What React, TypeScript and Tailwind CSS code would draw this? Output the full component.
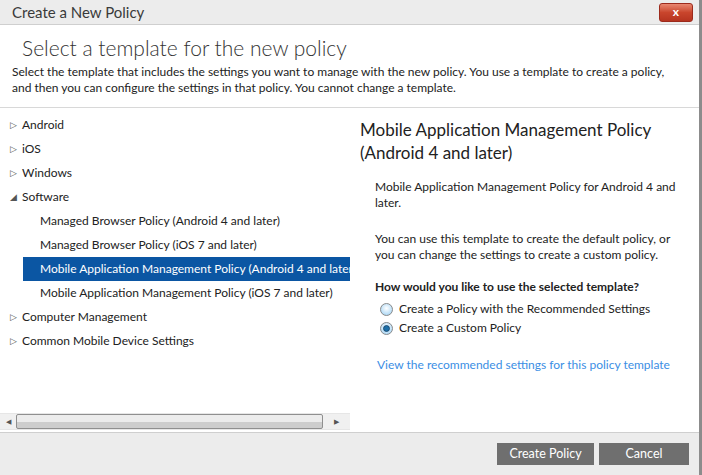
import { useState } from 'react';

const tree = [
  { label: 'Android', open: false },
  { label: 'iOS', open: false },
  { label: 'Windows', open: false },
  {
    label: 'Software',
    open: true,
    children: [
      'Managed Browser Policy (Android 4 and later)',
      'Managed Browser Policy (iOS 7 and later)',
      'Mobile Application Management Policy (Android 4 and later)',
      'Mobile Application Management Policy (iOS 7 and later)',
    ],
  },
  { label: 'Computer Management', open: false },
  { label: 'Common Mobile Device Settings', open: false },
];

function Radio({ checked }: { checked: boolean }) {
  return (
    <svg width="13" height="13" viewBox="0 0 13 13" className="shrink-0">
      <defs>
        <radialGradient id={checked ? 'rc' : 'ru'} cx="0.5" cy="0.4" r="0.6">
          <stop offset="0" stopColor="#ffffff" />
          <stop offset="1" stopColor="#a9d6f5" />
        </radialGradient>
      </defs>
      <circle cx="6.5" cy="6.5" r="6" fill={`url(#${checked ? 'rc' : 'ru'})`} stroke="#8a8a8a" />
      {checked && <circle cx="6.5" cy="6.5" r="3" fill="#1d6fa8" stroke="#0f3f66" strokeWidth="0.8" />}
    </svg>
  );
}

export default function App() {
  const [selected, setSelected] = useState('Mobile Application Management Policy (Android 4 and later)');
  const [mode, setMode] = useState<'recommended' | 'custom'>('custom');

  return (
    <div
      className="w-[702px] h-[475px] overflow-hidden flex flex-col bg-white text-[#222] border-r-[3px] border-[#8c8c8c]"
      style={{ fontFamily: 'Lato, "Open Sans", sans-serif' }}
    >
      {/* Title bar */}
      <div className="h-[25px] shrink-0 bg-[#ececec] border-b border-[#cfcfcf] flex items-center justify-between pl-3 pr-[6px]">
        <span className="text-[15px] text-[#3a3a3a]">Create a New Policy</span>
        <button className="w-[34px] h-[19px] rounded-[3px] border border-[#9c2a1c] bg-gradient-to-b from-[#e8866f] via-[#c9452c] to-[#b63420] text-white text-[12px] font-bold leading-none">
          x
        </button>
      </div>

      {/* Header */}
      <div className="shrink-0 px-[12px] pt-[9px] pb-[11px] border-b border-[#d8d8d8]">
        <h1 className="pl-[10px] text-[21px] font-light leading-[28px] text-[#333]">
          Select a template for the new policy
        </h1>
        <p className="text-[12px] leading-[16px] mt-[2px]">
          Select the template that includes the settings you want to manage with the new policy. You use a template to create a policy,
          <br />
          and then you can configure the settings in that policy. You cannot change a template.
        </p>
      </div>

      {/* Body */}
      <div className="flex flex-1 min-h-0">
        <div className="w-[350px] shrink-0 flex flex-col">
          <ul className="flex-1 pt-[5px] text-[12px] overflow-hidden">
            {tree.map((node) => (
              <li key={node.label}>
                <div className="h-[24px] flex items-center whitespace-nowrap pl-[10px]">
                  <span className="w-[12px] text-[9px] text-[#555]">{node.open ? '◢' : '▷'}</span>
                  <span>{node.label}</span>
                </div>
                {node.children?.map((c) => (
                  <div
                    key={c}
                    onClick={() => setSelected(c)}
                    className={`h-[24px] ml-[23px] pl-[17px] flex items-center whitespace-nowrap overflow-hidden cursor-default ${
                      c === selected ? 'bg-[#0b56a3] text-white' : ''
                    }`}
                  >
                    {c}
                  </div>
                ))}
              </li>
            ))}
          </ul>
          {/* Horizontal scrollbar */}
          <div className="h-[17px] mb-[2px] bg-[#f0f0f0] border-y border-[#e6e6e6] flex items-center">
            <span className="w-[16px] text-center text-[7px] text-[#555]">◀</span>
            <div className="w-[307px] h-[15px] rounded-[2px] border border-[#8f8f8f] bg-gradient-to-b from-[#ececec] from-50% to-[#cdcdcd] to-50%" />
            <span className="flex-1 text-center text-[7px] text-[#555]">▶</span>
          </div>
        </div>

        <div className="flex-1 pl-[10px] pr-[12px] pt-[10px]">
          <h2 className="text-[17px] leading-[23px] text-[#222]">
            Mobile Application Management Policy (Android 4 and later)
          </h2>
          <div className="pl-[15px] text-[12px] leading-[16px]">
            <p className="mt-[15px]">Mobile Application Management Policy for Android 4 and later.</p>
            <p className="mt-[20px]">
              You can use this template to create the default policy, or you can change the settings to create a custom policy.
            </p>
            <p className="mt-[16px] font-bold">How would you like to use the selected template?</p>
            <label className="mt-[6px] flex items-center gap-[6px] pl-[5px]" onClick={() => setMode('recommended')}>
              <Radio checked={mode === 'recommended'} />
              Create a Policy with the Recommended Settings
            </label>
            <label className="mt-[3px] flex items-center gap-[6px] pl-[5px]" onClick={() => setMode('custom')}>
              <Radio checked={mode === 'custom'} />
              Create a Custom Policy
            </label>
            <a className="block mt-[21px] pl-[2px] text-[#3b8ee4] whitespace-nowrap">View the recommended settings for this policy template</a>
          </div>
        </div>
      </div>

      {/* Footer */}
      <div className="h-[43px] shrink-0 bg-[#ececec] border-t border-[#cfcfcf] flex items-center justify-end gap-[5px] pr-[10px]">
        <button className="w-[97px] h-[22px] bg-[#6f6f6f] text-white text-[12.5px]">Create Policy</button>
        <button className="w-[90px] h-[22px] bg-[#6f6f6f] text-white text-[12.5px]">Cancel</button>
      </div>
    </div>
  );
}
